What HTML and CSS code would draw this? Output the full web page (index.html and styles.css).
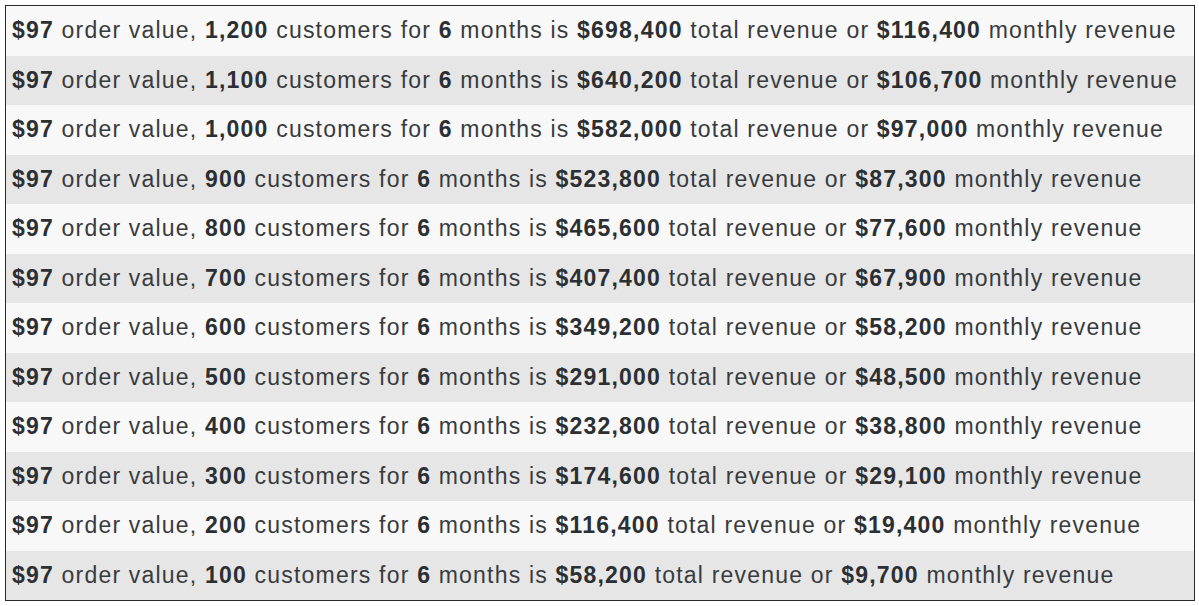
FILE: index.html
```html
<!DOCTYPE html>
<html>
<head>
<meta charset="utf-8">
<link rel="stylesheet" href="styles.css">
</head>
<body>
<div class="table">
  <div class="row"><b>$97</b> order value, <b>1,200</b> customers for <b>6</b> months is <b>$698,400</b> total revenue or <b>$116,400</b> monthly revenue</div>
  <div class="row"><b>$97</b> order value, <b>1,100</b> customers for <b>6</b> months is <b>$640,200</b> total revenue or <b>$106,700</b> monthly revenue</div>
  <div class="row"><b>$97</b> order value, <b>1,000</b> customers for <b>6</b> months is <b>$582,000</b> total revenue or <b>$97,000</b> monthly revenue</div>
  <div class="row"><b>$97</b> order value, <b>900</b> customers for <b>6</b> months is <b>$523,800</b> total revenue or <b>$87,300</b> monthly revenue</div>
  <div class="row"><b>$97</b> order value, <b>800</b> customers for <b>6</b> months is <b>$465,600</b> total revenue or <b>$77,600</b> monthly revenue</div>
  <div class="row"><b>$97</b> order value, <b>700</b> customers for <b>6</b> months is <b>$407,400</b> total revenue or <b>$67,900</b> monthly revenue</div>
  <div class="row"><b>$97</b> order value, <b>600</b> customers for <b>6</b> months is <b>$349,200</b> total revenue or <b>$58,200</b> monthly revenue</div>
  <div class="row"><b>$97</b> order value, <b>500</b> customers for <b>6</b> months is <b>$291,000</b> total revenue or <b>$48,500</b> monthly revenue</div>
  <div class="row"><b>$97</b> order value, <b>400</b> customers for <b>6</b> months is <b>$232,800</b> total revenue or <b>$38,800</b> monthly revenue</div>
  <div class="row"><b>$97</b> order value, <b>300</b> customers for <b>6</b> months is <b>$174,600</b> total revenue or <b>$29,100</b> monthly revenue</div>
  <div class="row"><b>$97</b> order value, <b>200</b> customers for <b>6</b> months is <b>$116,400</b> total revenue or <b>$19,400</b> monthly revenue</div>
  <div class="row"><b>$97</b> order value, <b>100</b> customers for <b>6</b> months is <b>$58,200</b> total revenue or <b>$9,700</b> monthly revenue</div>
</div>
</body>
</html>
```
FILE: styles.css
```css
html, body {
  margin: 0;
  padding: 0;
  background: #ffffff;
}
body {
  padding: 5px 4px 5px 5px;
}
.table {
  border: 1.5px solid #2a2a2a;
  display: flex;
  flex-direction: column;
  font-family: "Liberation Sans", Arial, sans-serif;
  font-size: 23px;
  letter-spacing: 1.2px;
  color: #383b3e;
}
.row {
  height: 49.5px;
  display: flex;
  align-items: center;
  padding-left: 6px;
  white-space: pre;
  background: #f8f8f8;
}
.row:nth-child(even) {
  background: #e6e6e6;
}
.row b {
  font-weight: bold;
  color: #2c2f32;
}
```
